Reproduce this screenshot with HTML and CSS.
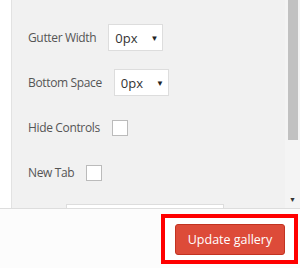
FILE: index.html
```html
<!DOCTYPE html>
<html lang="en">
<head>
    <meta charset="UTF-8">
    <title>Gallery settings</title>
    <link rel="stylesheet" href="styles.css">
</head>
<body>
    <div class="modal">
        <div class="frame">
            <div class="gutter"></div>
            <div class="settings">
                <div class="row">
                    <label>Gutter Width</label>
                    <div class="select">0px <span class="caret">&#9660;</span></div>
                </div>
                <div class="row">
                    <label>Bottom Space</label>
                    <div class="select">0px <span class="caret">&#9660;</span></div>
                </div>
                <div class="row">
                    <label>Hide Controls</label>
                    <div class="check"></div>
                </div>
                <div class="row">
                    <label>New Tab</label>
                    <div class="check"></div>
                </div>
                <div class="row cut">
                    <div class="field"></div>
                </div>
            </div>
            <div class="scrollbar">
                <div class="thumb"></div>
                <span class="arrow">&#9660;</span>
            </div>
        </div>

        <!-- footer with highlighted button -->
        <div class="footer">
            <div class="highlight">
                <button class="update">Update gallery</button>
            </div>
        </div>
    </div>
</body>
</html>
```

FILE: styles.css
```css
body {
    margin: 0;
    width: 300px;
    height: 268px;
    overflow: hidden;
    font-family: "Open Sans", "Noto Sans", sans-serif;
    background: #fff;
    color: #555;
}

.modal {
    display: flex;
    flex-direction: column;
    height: 268px;
}

.frame {
    display: flex;
    height: 208px;
    flex-shrink: 0;
    overflow: hidden;
}

.gutter {
    width: 11px;
    background: #fff;
    border-right: 1px solid #e2e2e2;
}

.settings {
    flex: 1;
    background: #f1f1f1;
    padding: 24px 0 0 16px;
    display: flex;
    flex-direction: column;
    gap: 18px;
}

.row {
    display: flex;
    align-items: center;
    gap: 12px;
    height: 27px;
    flex-shrink: 0;
    font-size: 12px;
}

.row label {
    letter-spacing: -0.35px;
}

.select {
    width: 43px;
    height: 25px;
    border: 1px solid #ddd;
    background: #fff;
    color: #333;
    font-size: 13px;
    display: flex;
    align-items: center;
    justify-content: space-between;
    padding: 0 4px 0 6px;
}

.caret {
    font-size: 8px;
    color: #222;
}

.check {
    width: 14px;
    height: 14px;
    border: 1px solid #bbb;
    background: #fff;
}

.cut {
    padding-left: 38px;
    align-items: flex-start;
}

.field {
    width: 156px;
    height: 20px;
    border: 1px solid #ddd;
    background: #fff;
}

.scrollbar {
    width: 15px;
    background: #f4f4f4;
    display: flex;
    flex-direction: column;
    align-items: center;
    justify-content: space-between;
    padding-bottom: 4px;
    box-sizing: border-box;
}

.thumb {
    width: 10px;
    height: 140px;
    background: #c1c1c1;
}

.arrow {
    font-size: 7px;
    color: #333;
}

.footer {
    flex: 1;
    background: #fcfcfc;
    border-top: 1px solid #ddd;
    display: flex;
    justify-content: flex-end;
    align-items: flex-start;
    padding: 5px 2px 0 0;
}

.highlight {
    border: 4px solid #f00;
    padding: 6px 9px 5px 10px;
    background: #fff;
}

.update {
    background: #dd4b39;
    color: #fff;
    border: 1px solid #c23321;
    border-radius: 3px;
    width: 110px;
    height: 31px;
    font-family: "Open Sans", "Noto Sans", sans-serif;
    font-size: 12.5px;
}
```
